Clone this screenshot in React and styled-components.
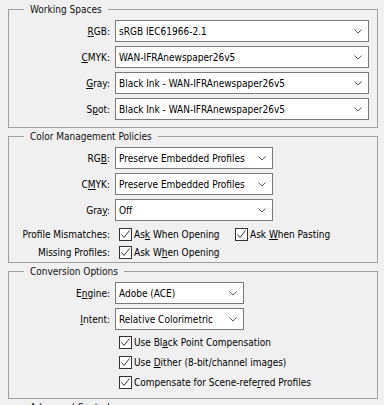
import React from 'react';
import styled, { createGlobalStyle } from 'styled-components';

const GlobalStyle = createGlobalStyle`
  html, body {
    margin: 0;
    background: #f0f0f0;
    overflow: hidden;
  }

  body {
    font-family: "DejaVu Sans Condensed", "Liberation Sans", sans-serif;
    font-size: 10px;
    color: #000;
  }
`;

const Dialog = styled.div`
  width: 384px;
  box-sizing: border-box;
  padding: 3px 6px 0 8px;
  display: flex;
  flex-direction: column;
  gap: 2px;
`;

const Group = styled.fieldset`
  margin: 0;
  min-width: 0;
  padding: 4px 8px ${({ $bottom }) => $bottom}px 0;
  border: 1px solid #a0a0a0;
  display: flex;
  flex-direction: column;
  gap: 4px;
`;

const Legend = styled.legend`
  margin-left: 15px;
  padding: 0 6px;
  line-height: 13px;
  color: #101010;
`;

const Row = styled.div`
  display: grid;
  grid-template-columns: 101px auto;
  column-gap: 5px;
  align-items: center;
  justify-content: start;
`;

const Label = styled.span`
  text-align: right;
  white-space: nowrap;
`;

const SelectBox = styled.div`
  width: ${({ $width }) => $width}px;
  height: 22px;
  box-sizing: border-box;
  border: 1px solid #7a7a7a;
  background: #fff;
  padding: 0 6px 0 3px;
  display: flex;
  align-items: center;
  justify-content: space-between;
  white-space: nowrap;
`;

const Chevron = styled.svg`
  width: 8px;
  height: 5px;
  flex: none;
`;

const CheckList = styled.div`
  display: flex;
  flex-direction: column;
  gap: ${({ $gap }) => $gap}px;
`;

const CheckRow = styled.div`
  height: ${({ $height }) => $height}px;
  display: grid;
  grid-template-columns: 101px auto;
  column-gap: 9px;
  align-items: center;
  justify-content: start;
`;

const Checks = styled.div`
  display: flex;
  align-items: center;
`;

const CheckItem = styled.label`
  display: flex;
  align-items: center;
  gap: 2px;
  white-space: nowrap;
  width: ${({ $width }) => ($width ? `${$width}px` : 'auto')};
`;

const Box = styled.span`
  width: 13px;
  height: 13px;
  box-sizing: border-box;
  border: 1px solid #333;
  background: #fff;
  display: flex;
  align-items: center;
  justify-content: center;
  flex: none;
`;

function Select({ width, children }) {
  return (
    <SelectBox $width={width}>
      <span>{children}</span>
      <Chevron viewBox="0 0 8 5">
        <polyline points="0.5,0.5 4,4 7.5,0.5" fill="none" stroke="#606060" strokeWidth="1" />
      </Chevron>
    </SelectBox>
  );
}

function Check({ width, children }) {
  return (
    <CheckItem $width={width}>
      <Box>
        <svg width="11" height="11" viewBox="0 0 11 11">
          <polyline points="1.5,5.5 4,8.5 9.5,1.5" fill="none" stroke="#333" strokeWidth="1" />
        </svg>
      </Box>
      <span>{children}</span>
    </CheckItem>
  );
}

function Field({ label, width, children }) {
  return (
    <Row>
      <Label>{label}</Label>
      <Select width={width}>{children}</Select>
    </Row>
  );
}

export default function App() {
  return (
    <>
      <GlobalStyle />
      <Dialog>
        <Group $bottom={7}>
          <Legend>Working Spaces</Legend>
          <Field label={<><u>R</u>GB:</>} width={254}>sRGB IEC61966-2.1</Field>
          <Field label={<><u>C</u>MYK:</>} width={254}>WAN-IFRAnewspaper26v5</Field>
          <Field label={<><u>G</u>ray:</>} width={254}>Black Ink - WAN-IFRAnewspaper26v5</Field>
          <Field label={<>S<u>p</u>ot:</>} width={254}>Black Ink - WAN-IFRAnewspaper26v5</Field>
        </Group>

        <Group $bottom={1}>
          <Legend>Color Management Policies</Legend>
          <Field label={<>RG<u>B</u>:</>} width={158}>Preserve Embedded Profiles</Field>
          <Field label={<>C<u>M</u>YK:</>} width={158}>Preserve Embedded Profiles</Field>
          <Field label={<>Gra<u>y</u>:</>} width={158}>Off</Field>
          <CheckList $gap={0}>
            <CheckRow $height={18}>
              <Label>Profile Mismatches:</Label>
              <Checks>
                <Check width={116}>As<u>k</u> When Opening</Check>
                <Check>Ask <u>W</u>hen Pasting</Check>
              </Checks>
            </CheckRow>
            <CheckRow $height={18}>
              <Label>Missing Profiles:</Label>
              <Checks>
                <Check>Ask W<u>h</u>en Opening</Check>
              </Checks>
            </CheckRow>
          </CheckList>
        </Group>

        <Group $bottom={8}>
          <Legend>Conversion Options</Legend>
          <Field label={<>E<u>n</u>gine:</>} width={129}>Adobe (ACE)</Field>
          <Field label={<><u>I</u>ntent:</>} width={129}>Relative Colorimetric</Field>
          <CheckList $gap={4}>
            <CheckRow $height={16}>
              <span />
              <Check>Use Bl<u>a</u>ck Point Compensation</Check>
            </CheckRow>
            <CheckRow $height={16}>
              <span />
              <Check>Use <u>D</u>ither (8-bit/channel images)</Check>
            </CheckRow>
            <CheckRow $height={16}>
              <span />
              <Check>Compensate for Scene-refe<u>r</u>red Profiles</Check>
            </CheckRow>
          </CheckList>
        </Group>

        <Group $bottom={8}>
          <Legend>Advanced Controls</Legend>
          <CheckRow $height={18}>
            <span />
            <Check>Desaturate Monitor Colors By:</Check>
          </CheckRow>
        </Group>
      </Dialog>
    </>
  );
}
